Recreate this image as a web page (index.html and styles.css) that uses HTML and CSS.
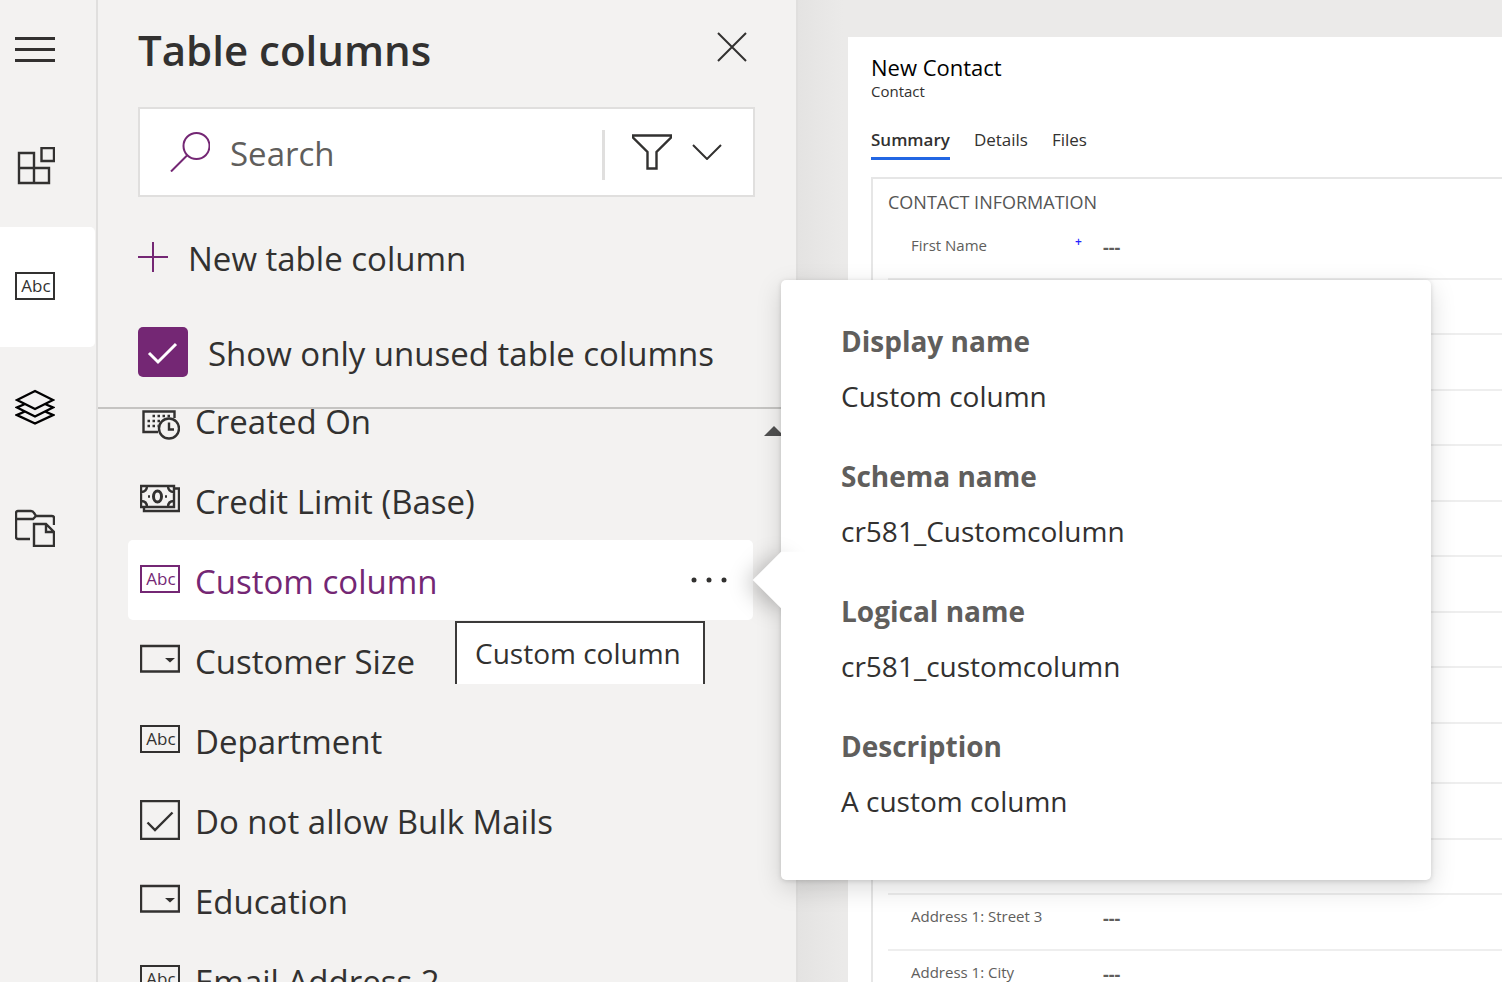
FILE: index.html
```html
<!DOCTYPE html>
<html lang="en">
<head>
<meta charset="utf-8">
<title>Table columns</title>
<link rel="stylesheet" href="styles.css">
</head>
<body>
<div class="app">
  <nav class="rail" aria-label="Designer panes">
    <button class="rail-item" aria-label="Menu">
      <svg class="icon" viewBox="0 0 40 40"><path d="M0 9.500h40M0 20.500h40M0 31.500h40" stroke-width="3"/></svg>
    </button>
    <button class="rail-item" aria-label="Components">
      <svg class="icon" viewBox="0 0 40 40"><path d="M4 6h15v30H4zM4 21h30v15H4M26.500 1h12.500v13H26.500z"/></svg>
    </button>
    <button class="rail-item rail-item-active" aria-label="Table columns"><span class="abc">Abc</span></button>
    <button class="rail-item" aria-label="Tree view">
      <svg class="icon icon-black" viewBox="0 0 40 40"><path d="M20 4 38 13 20 22 2 13zM10 17 2 20.500 20 29.500 38 20.500 30 17M10 24.500 2 28 20 36.500 38 28 30 24.500"/></svg>
    </button>
    <button class="rail-item" aria-label="Form libraries">
      <svg class="icon" viewBox="0 0 40 40"><path d="M15 32H3q-2 0-2-2V6q0-2 2-2h13q2 0 3 2l2 3h16q2 0 2 2v7M1 12h17l3-3M19 17h12l8 8v14H19zM31 17v8h8"/></svg>
    </button>
  </nav>

  <section class="panel">
    <header class="panel-header">
      <h1 class="panel-title">Table columns</h1>
      <button class="close" aria-label="Close">
        <svg class="icon-close" viewBox="0 0 32 32"><path d="M2 2 30 30M30 2 2 30"/></svg>
      </button>
    </header>
    <div class="search">
      <svg class="icon icon-accent" viewBox="0 0 40 40"><circle cx="26.500" cy="14" r="13"/><path d="M17 23.500 1 39.500"/></svg>
      <input class="search-input" type="search" placeholder="Search" aria-label="Search">
      <button class="filter" aria-label="Filter">
        <svg class="icon" viewBox="0 0 40 40"><path d="M1 3.500h38v2L24.500 20v16.500h-9V20L1 5.500z"/></svg>
        <svg class="icon-chevron" viewBox="0 0 30 16"><path d="M1 1 15 15 29 1"/></svg>
      </button>
    </div>
    <button class="new-column">
      <svg class="icon-plus" viewBox="0 0 30 30"><path d="M0 15h30M15 0v30"/></svg>
      <span class="label">New table column</span>
    </button>
    <label class="unused">
      <span class="check-box">
        <input class="check-input" type="checkbox" checked>
        <svg class="check-mark" viewBox="0 0 50 50"><path d="M11 26 20 35 38 17"/></svg>
      </span>
      <span class="label">Show only unused table columns</span>
    </label>

    <div class="list-area">
      <ul class="column-list">
        <li class="column"><svg class="icon" viewBox="0 0 40 40"><path d="M18 32H3.500V11.500h31V18"/><circle cx="29" cy="28.500" r="10"/><path d="M29 22.500v7h5"/><path d="M12.500 16h18M7.500 21h14M7.500 26h11" stroke-width="2.500" stroke-dasharray="2.500 2.500"/></svg><span class="label">Created On</span></li>
        <li class="column"><svg class="icon" viewBox="0 0 40 40"><path d="M1 6h33v21H1zM34 8.500h5V31H4v-4M7 6q0 6-6 6M28 6q0 6 6 6M7 27q0-6-6-6M28 27q0-6 6-6"/><ellipse cx="17.500" cy="16.500" rx="4" ry="5.500" stroke-width="3"/><path d="M8 16.500h2M25 16.500h2"/></svg><span class="label">Credit Limit (Base)</span></li>
        <li class="column column-active"><span class="abc">Abc</span><span class="label">Custom column</span>
          <button class="more" aria-label="More options"><svg class="icon-more" viewBox="0 0 38 6"><circle cx="4" cy="3" r="2.500"/><circle cx="19" cy="3" r="2.500"/><circle cx="34" cy="3" r="2.500"/></svg></button></li>
        <li class="column"><svg class="icon" viewBox="0 0 40 40"><path d="M1 6h38v25.500H1z"/><path class="solid" d="M25 18h10L30 22.500z"/></svg><span class="label">Customer Size</span></li>
        <li class="column"><span class="abc">Abc</span><span class="label">Department</span></li>
        <li class="column"><svg class="icon" viewBox="0 0 40 40"><path d="M1 1h38v38H1zM7.500 22.500 15 30 32.500 12.500"/></svg><span class="label">Do not allow Bulk Mails</span></li>
        <li class="column"><svg class="icon" viewBox="0 0 40 40"><path d="M1 6h38v25.500H1z"/><path class="solid" d="M25 18h10L30 22.500z"/></svg><span class="label">Education</span></li>
        <li class="column"><span class="abc">Abc</span><span class="label">Email Address 2</span></li>
      </ul>
      <div class="scrollbar"><svg class="icon-scroll" viewBox="0 0 20 10"><path d="M0 10 10 0l10 10z"/></svg></div>
    </div>
  </section>

  <main class="canvas">
    <article class="form">
      <h2 class="form-title">New Contact</h2>
      <p class="form-entity">Contact</p>
      <nav class="tabs">
        <a class="tab tab-active" href="#summary">Summary</a>
        <a class="tab" href="#details">Details</a>
        <a class="tab" href="#files">Files</a>
      </nav>
      <section class="form-section" id="summary">
        <h3 class="section-title">CONTACT INFORMATION</h3>
        <div class="fields">
          <div class="field"><span class="field-label">First Name</span><span class="field-mark">+</span><span class="field-value">---</span></div>
          <div class="field"></div>
          <div class="field"></div>
          <div class="field"></div>
          <div class="field"></div>
          <div class="field"></div>
          <div class="field"></div>
          <div class="field"></div>
          <div class="field"></div>
          <div class="field field-tall"></div>
          <div class="field"></div>
          <div class="field"></div>
          <div class="field"><span class="field-label">Address 1: Street 3</span><span class="field-mark"></span><span class="field-value">---</span></div>
          <div class="field"><span class="field-label">Address 1: City</span><span class="field-mark"></span><span class="field-value">---</span></div>
        </div>
      </section>
    </article>
  </main>

  <div class="tooltip" role="tooltip">Custom column</div>

  <aside class="callout">
    <span class="callout-beak"></span>
    <dl class="details">
      <dt>Display name</dt><dd>Custom column</dd>
      <dt>Schema name</dt><dd>cr581_Customcolumn</dd>
      <dt>Logical name</dt><dd>cr581_customcolumn</dd>
      <dt>Description</dt><dd>A custom column</dd>
    </dl>
  </aside>
</div>
</body>
</html>
```
FILE: styles.css
```css
:root {
  --accent: #742774;
  --ink: #323130;
  --surface: #f3f2f1;
  --line: #e0dfde;
}
* { box-sizing: border-box; }
body {
  margin: 0;
  font-family: "Open Sans", "Noto Sans", sans-serif;
  color: var(--ink);
  background: #ebeae9;
}
button {
  margin: 0;
  padding: 0;
  border: 0;
  background: none;
  font: inherit;
  color: inherit;
}
h1, h2, h3, p, ul, dl, dd { margin: 0; padding: 0; }
svg {
  display: block;
  flex: none;
  fill: none;
  stroke: currentColor;
  stroke-width: 2;
}
.app {
  position: relative;
  display: flex;
  height: 100vh;
  overflow: hidden;
}
.icon { width: 40px; height: 40px; stroke-width: 2.4; }
.icon-accent { color: var(--accent); stroke-width: 2; }
.icon-black { color: #000; }
.solid { fill: currentColor; stroke: none; }
.abc {
  flex: none;
  width: 40px;
  height: 28px;
  margin-bottom: 2px;
  padding-left: 2px;
  border: 2px solid currentColor;
  font-size: 17px;
  line-height: 24px;
  text-align: center;
}
.label { padding-top: 3px; white-space: nowrap; }

.rail {
  flex: none;
  width: 98px;
  border-right: 2px solid var(--line);
  background: var(--surface);
  display: flex;
  flex-direction: column;
}
.rail-item {
  flex: none;
  width: 95px;
  height: 120px;
  padding-left: 15px;
  display: flex;
  align-items: center;
  border-radius: 0 5px 5px 0;
}
.rail-item:first-child { height: 107px; padding-bottom: 10px; }
.rail-item-active { background: #fff; }

.panel {
  flex: none;
  width: 700px;
  border-right: 2px solid var(--line);
  background: var(--surface);
  display: flex;
  flex-direction: column;
}
.panel-header {
  display: flex;
  justify-content: space-between;
  align-items: center;
  height: 107px;
  padding: 0 48px 8px 40px;
}
.panel-title { font-size: 42px; line-height: 60px; font-weight: 600; }
.close { padding-bottom: 5px; }
.icon-close { width: 32px; height: 32px; }
.search {
  height: 90px;
  margin: 0 41px 0 40px;
  padding: 0 31px 0 30px;
  border: 2px solid var(--line);
  background: #fff;
  display: flex;
  align-items: center;
}
.search-input {
  flex: 1;
  min-width: 0;
  padding: 3px 0 0;
  margin-left: 20px;
  border: 0;
  outline: 0;
  font: inherit;
  font-size: 33px;
  background: none;
}
.search-input::placeholder { color: #605e5c; opacity: 1; }
.filter {
  height: 50px;
  margin-top: 6px;
  padding: 0 0 6px 27px;
  border-left: 3px solid var(--line);
  display: flex;
  align-items: center;
  gap: 20px;
}
.icon-chevron { width: 30px; height: 16px; }
.new-column {
  height: 80px;
  margin: 20px 40px 0;
  display: flex;
  align-items: center;
  gap: 20px;
  font-size: 33px;
}
.icon-plus { width: 30px; height: 30px; color: var(--accent); }
.unused {
  height: 50px;
  margin: 30px 40px;
  display: flex;
  align-items: center;
  gap: 20px;
  font-size: 33px;
}
.check-box { display: grid; width: 50px; height: 50px; }
.check-box > * { grid-area: 1 / 1; }
.check-input {
  appearance: none;
  width: 50px;
  height: 50px;
  margin: 0;
  border-radius: 5px;
  background: var(--accent);
}
.check-mark { width: 50px; height: 50px; color: #fff; stroke-width: 3; }

.list-area {
  flex: 1;
  min-height: 0;
  border-top: 2px solid #c5c4c2;
  display: flex;
  overflow: hidden;
}
.column-list {
  flex: 1;
  margin: -29px 11px 0 30px;
  list-style: none;
}
.column {
  height: 80px;
  padding: 0 25px 0 12px;
  display: flex;
  align-items: center;
  gap: 15px;
  font-size: 33px;
  border-radius: 5px;
}
.column-active { background: #fff; color: var(--accent); }
.more { margin-left: auto; color: var(--ink); }
.icon-more { width: 38px; height: 6px; fill: currentColor; stroke: none; }
.scrollbar { width: 32px; padding-top: 17px; }
.icon-scroll { width: 20px; height: 10px; fill: #505050; stroke: none; }

.canvas {
  flex: 1;
  min-width: 0;
  padding: 37px 0 0 50px;
  background: linear-gradient(90deg, #e4e3e2, #ebeae9 45px);
  display: flex;
}
.form { flex: 1; padding: 14px 0 0 23px; background: #fff; }
.form-title { font-size: 22px; line-height: 32px; font-weight: 400; color: #000; }
.form-entity { font-size: 15px; line-height: 16px; }
.tabs { display: flex; gap: 24px; margin-top: 28px; }
.tab {
  padding-bottom: 4px;
  border-bottom: 3px solid transparent;
  font-size: 17px;
  line-height: 26px;
  color: var(--ink);
  text-decoration: none;
}
.tab-active { border-color: #2266e3; font-weight: 600; }
.form-section {
  margin-top: 17px;
  padding: 9px 0 0 15px;
  border: 2px solid #e6e6e6;
  border-width: 2px 0 0 2px;
}
.section-title { font-size: 18px; line-height: 28px; font-weight: 400; color: #555; }
.fields { padding-top: 8px; }
.field {
  height: 55px;
  padding: 8px 0 0 23px;
  border-bottom: 2px solid #eee;
  display: flex;
  font-size: 15px;
  line-height: 26px;
  color: #605e5c;
}
.field:nth-child(odd) { height: 56px; }
.field-tall { height: 60px; }
.field-label { width: 164px; }
.field-mark { width: 28px; font-size: 12px; line-height: 19px; font-weight: 600; color: #2222ff; }
.field-value { font-weight: 700; font-size: 18px; line-height: 30px; }

.tooltip {
  position: absolute;
  left: 455px;
  top: 621px;
  height: 63px;
  padding: 0 22px 0 18px;
  border: 2px solid #3b3a39;
  border-bottom: 0;
  background: #fff;
  font-size: 28px;
  line-height: 60px;
}
.callout {
  position: absolute;
  left: 781px;
  top: 280px;
  width: 650px;
  padding: 41px 60px 59px;
  border-radius: 5px;
  background: #fff;
  box-shadow: 0 8px 26px rgba(0, 0, 0, .15), 0 1px 5px rgba(0, 0, 0, .14);
}
.callout-beak {
  position: absolute;
  left: -20px;
  top: 280px;
  width: 40px;
  height: 40px;
  background: #fff;
  transform: rotate(45deg);
  box-shadow: -2px 6px 22px rgba(0, 0, 0, .26);
  clip-path: polygon(-100% -100%, 100% -100%, 0 0, 100% 100%, 200% 200%, -100% 200%);
}
.details { position: relative; }
.details dt {
  font-size: 28px;
  line-height: 40px;
  font-weight: 700;
  color: #605e5c;
  margin-bottom: 15px;
}
.details dd { font-size: 28px; line-height: 40px; margin-bottom: 40px; }
.details dd:last-child { margin-bottom: 0; }
```
